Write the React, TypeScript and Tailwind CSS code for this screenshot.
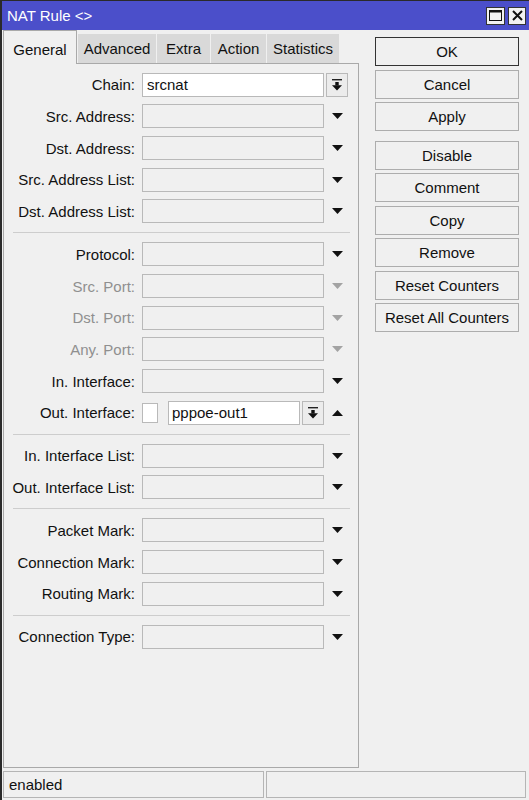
import React from "react";

type Row = {
  label: string;
  kind?: "chain" | "out" | "plain";
  disabled?: boolean;
};

const sections: Row[][] = [
  [
    { label: "Chain", kind: "chain" },
    { label: "Src. Address" },
    { label: "Dst. Address" },
    { label: "Src. Address List" },
    { label: "Dst. Address List" },
  ],
  [
    { label: "Protocol" },
    { label: "Src. Port", disabled: true },
    { label: "Dst. Port", disabled: true },
    { label: "Any. Port", disabled: true },
    { label: "In. Interface" },
    { label: "Out. Interface", kind: "out" },
  ],
  [{ label: "In. Interface List" }, { label: "Out. Interface List" }],
  [{ label: "Packet Mark" }, { label: "Connection Mark" }, { label: "Routing Mark" }],
  [{ label: "Connection Type" }],
];

const tabs = [
  { name: "Advanced", w: "w-[78px]" },
  { name: "Extra", w: "w-[53px]" },
  { name: "Action", w: "w-[55px]" },
  { name: "Statistics", w: "w-[72px]" },
];

const buttons = ["OK", "Cancel", "Apply", "Disable", "Comment", "Copy", "Remove", "Reset Counters", "Reset All Counters"];

const TriDown = ({ gray }: { gray?: boolean }) => (
  <svg width="11" height="6" viewBox="0 0 11 6">
    <path d="M0 0H11L5.5 6Z" fill={gray ? "#a3a3a3" : "#111"} />
  </svg>
);

const TriUp = () => (
  <svg width="11" height="6" viewBox="0 0 11 6">
    <path d="M0 6H11L5.5 0Z" fill="#111" />
  </svg>
);

// bar + arrow icon used on the small drop buttons
const DropIcon = () => (
  <svg width="10" height="12" viewBox="0 0 10 12">
    <rect x="0" y="0" width="10" height="1.4" fill="#222" />
    <rect x="3.3" y="3" width="3.4" height="3.5" fill="#111" />
    <path d="M0 6.3H10L5 11.5Z" fill="#111" />
  </svg>
);

const DropButton = () => (
  <div className="w-[22px] h-6 border border-[#b9b9b9] bg-[#ececec] flex items-center justify-center">
    <DropIcon />
  </div>
);

const FieldRow = ({ row }: { row: Row }) => {
  return (
    <div className="flex items-center h-[31.67px]">
      <div className={row.disabled ? "w-[131px] text-right text-[#8f8f8f]" : "w-[131px] text-right text-[#111]"}>
        {row.label}:
      </div>
      {row.kind === "chain" && (
        <>
          <div className="ml-[7px] w-[182px] h-6 border border-[#b9b9b9] bg-white flex items-center pl-1 text-[#111]">
            srcnat
          </div>
          <div className="ml-[2px]">
            <DropButton />
          </div>
        </>
      )}
      {row.kind === "out" && (
        <>
          <div className="ml-[7px] w-4 h-5 border border-[#b9b9b9] bg-white" />
          <div className="ml-[10px] w-[132px] h-6 border border-[#b9b9b9] bg-white flex items-center pl-[3px] text-[#111]">
            pppoe-out1
          </div>
          <div className="ml-[2px]">
            <DropButton />
          </div>
          <div className="ml-[2px] w-[22px] flex justify-center">
            <TriUp />
          </div>
        </>
      )}
      {(row.kind === undefined || row.kind === "plain") && (
        <>
          <div className="ml-[7px] w-[182px] h-6 border border-[#b9b9b9] bg-[#f0f0f0]" />
          <div className="ml-[2px] w-[22px] flex justify-center">
            <TriDown gray={row.disabled} />
          </div>
        </>
      )}
    </div>
  );
};

const App: React.FC = () => {
  return (
    <div className="w-[529px] h-[800px] flex flex-col bg-[#f0f0f0] border-l-2 border-[#2a2a2a] font-['Liberation_Sans',Arial,sans-serif] text-[15px] leading-none overflow-hidden">
      {/* title bar */}
      <div className="h-[30px] bg-[#4b4fca] border-t border-[#2a2a2a] flex items-center justify-between pl-[5px] pr-[3px]">
        <span className="text-white">NAT Rule &lt;&gt;</span>
        <div className="flex items-center gap-[3px]">
          <div className="w-[19px] h-[18px] bg-[#f2f2f2] border border-[#333] flex items-center justify-center">
            <svg width="13" height="11" viewBox="0 0 13 11">
              <rect x="0.5" y="0.5" width="12" height="10" fill="none" stroke="#111" />
              <rect x="0" y="0" width="13" height="2.5" fill="#111" />
            </svg>
          </div>
          <div className="w-[18px] h-[18px] bg-[#f2f2f2] border border-[#333] flex items-center justify-center">
            <svg width="11" height="11" viewBox="0 0 11 11">
              <path d="M1 1L10 10M10 1L1 10" stroke="#111" strokeWidth="2" />
            </svg>
          </div>
        </div>
      </div>

      {/* body */}
      <div className="flex-1 flex pt-px pl-px">
        <div className="w-[356px] flex flex-col">
          <div className="h-[33px] flex items-end gap-px relative z-10 -mb-px">
            <div className="w-[74px] h-[34px] bg-[#f0f0f0] border border-b-0 border-[#a9a9a9] flex items-center justify-center pt-[3px] text-[#111]">
              General
            </div>
            {tabs.map((t) => (
              <div key={t.name} className={`${t.w} h-[29px] mb-px bg-[#d9d9d9] flex items-center justify-center text-[#111]`}>
                {t.name}
              </div>
            ))}
          </div>
          <div className="flex-1 border border-[#a9a9a9] pt-[5px]">
            {sections.map((sec, i) => (
              <div key={i}>
                {i > 0 && (
                  <div className="h-[11.33px] flex items-center">
                    <div className="ml-[9px] mr-[8px] flex-1 h-px bg-[#cdcdcd]" />
                  </div>
                )}
                {sec.map((r) => (
                  <FieldRow key={r.label} row={r} />
                ))}
              </div>
            ))}
          </div>
        </div>

        <div className="ml-[16px] w-[144px] pt-[6px] flex flex-col gap-[3.5px]">
          {buttons.map((b) => (
            <div
              key={b}
              className={`h-[29px] flex items-center justify-center bg-[#f0f0f0] text-[#111] border ${
                b === "OK" ? "border-[#333]" : "border-[#adadad]"
              } ${b === "Disable" ? "mt-[6px]" : ""}`}
            >
              {b}
            </div>
          ))}
        </div>
      </div>

      {/* status bar */}
      <div className="mt-[3px] mb-[2px] h-[27px] flex gap-[2px] pl-px pr-[3px]">
        <div className="w-[261px] border border-[#b5b5b5] flex items-center pl-[5px] text-[#111]">enabled</div>
        <div className="flex-1 border border-[#b5b5b5]" />
      </div>
    </div>
  );
};

export default App;
